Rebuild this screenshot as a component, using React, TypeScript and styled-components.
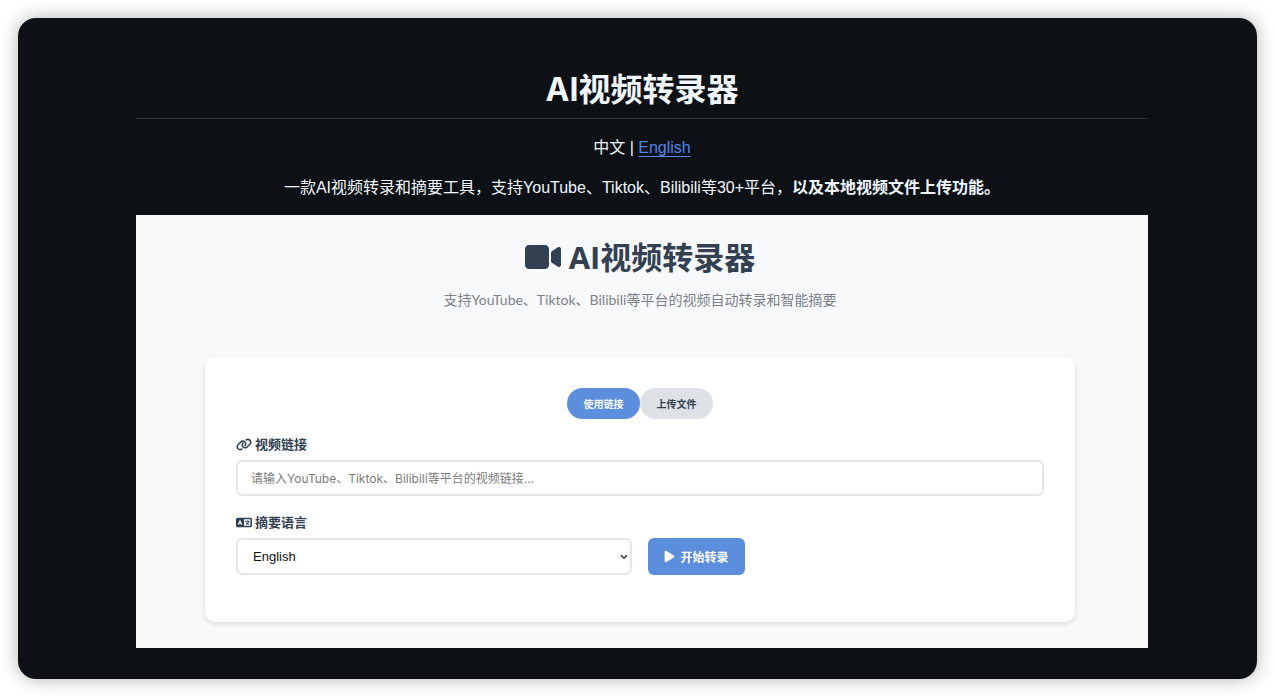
import React, { useState } from "react";
import styled, { createGlobalStyle } from "styled-components";
import { FaVideo, FaLink, FaLanguage, FaPlay } from "react-icons/fa6";

const GlobalStyle = createGlobalStyle`
  *, *::before, *::after { box-sizing: border-box; }
  body {
    margin: 0;
    background: #ffffff;
    font-family: "Liberation Sans", "Noto Sans CJK SC", sans-serif;
  }
`;

const Page = styled.div`
  min-height: 100vh;
  padding: 18px;
  display: flex;
`;

const Frame = styled.main`
  flex: 1;
  min-width: 0;
  padding: 48px 109px 31px 118px;
  border-radius: 18px;
  background: #0d1116;
  color: #f0f6fc;
  box-shadow: 0 0 18px rgba(0, 0, 0, 0.3);
  text-align: center;
`;

const Title = styled.h1`
  margin: 0;
  padding-bottom: 4px;
  border-bottom: 1px solid #2f3238;
  font-family: Inter, "Noto Sans CJK SC", sans-serif;
  font-size: 32px;
  line-height: 48px;
  font-weight: 700;
`;

const Intro = styled.div`
  display: flex;
  flex-direction: column;
  gap: 16px;
  padding: 17px 0 15px;
`;

const Paragraph = styled.p`
  margin: 0;
  font-size: 16px;
  line-height: 24px;
  font-weight: 400;
`;

const LanguageLink = styled.a`
  color: #4f86ea;
  text-decoration: underline;
  text-underline-offset: 3px;
`;

const Panel = styled.section`
  padding: 20px 73px 26px 69px;
  background: #f8f9fb;
  color: #334155;
`;

const PanelTitle = styled.h2`
  display: flex;
  align-items: center;
  justify-content: center;
  gap: 8px;
  margin: 0 0 13px;
  font-family: "Open Sans", "Noto Sans CJK SC", sans-serif;
  font-size: 31px;
  line-height: 44px;
  font-weight: 700;
  color: #334051;

  svg { width: 36px; height: 32px; }
`;

const Subtitle = styled.p`
  margin: 0 0 50px;
  font-family: Lato, "Noto Sans CJK SC", sans-serif;
  font-size: 14px;
  line-height: 15px;
  color: #7c8188;
`;

const Card = styled.form`
  display: flex;
  flex-direction: column;
  padding: 31px 31px 47px;
  border-radius: 10px;
  background: #ffffff;
  box-shadow: 0 2px 5px rgba(0, 0, 0, 0.12);
  text-align: left;
`;

const Tabs = styled.div`
  display: flex;
  justify-content: center;
  margin-bottom: 15px;
`;

const Tab = styled.button<{ $active: boolean }>`
  width: 73px;
  height: 31px;
  padding: 0;
  border: 0;
  border-radius: 16px;
  background: ${(p) => (p.$active ? "#5b8fdd" : "#dee1e6")};
  color: ${(p) => (p.$active ? "#ffffff" : "#334051")};
  font-family: "Noto Sans CJK SC", sans-serif;
  font-size: 10px;
  font-weight: 700;
`;

const Field = styled.div`
  display: flex;
  flex-direction: column;
  gap: 6px;
  min-width: 0;
`;

const Label = styled.label`
  display: flex;
  align-items: center;
  gap: 3px;
  font-family: "Noto Sans CJK SC", sans-serif;
  font-size: 13px;
  line-height: 20px;
  font-weight: 700;
  color: #334051;

  svg { width: 16px; height: 13px; }
`;

const UrlInput = styled.input`
  width: 100%;
  height: 36px;
  padding: 0 13px;
  border: 2px solid #e4e6eb;
  border-radius: 6px;
  background: #ffffff;
  font-family: Inter, "Noto Sans CJK SC", sans-serif;
  font-size: 12px;

  &::placeholder { color: #7b7b7b; opacity: 1; }
`;

const ActionRow = styled.div`
  display: grid;
  grid-template-columns: 49% auto;
  justify-content: start;
  align-items: end;
  gap: 16px;
  margin-top: 16px;
`;

const SelectBox = styled.div`
  position: relative;

  svg {
    position: absolute;
    right: 4px;
    top: 50%;
    margin-top: -3px;
    pointer-events: none;
  }
`;

const Select = styled.select`
  display: block;
  appearance: none;
  width: 100%;
  height: 37px;
  padding: 0 15px;
  border: 2px solid #e4e6eb;
  border-radius: 6px;
  background: #ffffff;
  color: #111111;
  font-family: "Liberation Sans", Arial, sans-serif;
  font-size: 13px;
`;

const StartButton = styled.button`
  display: flex;
  align-items: center;
  justify-content: center;
  gap: 5px;
  width: 97px;
  height: 37px;
  padding: 0;
  border: 0;
  border-radius: 6px;
  background: #5b8fdd;
  color: #ffffff;
  font-family: "Noto Sans CJK SC", sans-serif;
  font-size: 12px;
  font-weight: 700;

  svg { width: 11px; height: 13px; }
`;

type Source = "link" | "file";

export default function App() {
  const [source, setSource] = useState<Source>("link");

  return (
    <>
      <GlobalStyle />
      <Page>
        <Frame lang="zh-CN">
          <Title>AI视频转录器</Title>
          <Intro>
            <Paragraph>
              中文 | <LanguageLink href="#english">English</LanguageLink>
            </Paragraph>
            <Paragraph>
              一款AI视频转录和摘要工具，支持YouTube、Tiktok、Bilibili等30+平台，
              <strong>以及本地视频文件上传功能。</strong>
            </Paragraph>
          </Intro>
          <Panel>
            <PanelTitle>
              <FaVideo aria-hidden />
              AI视频转录器
            </PanelTitle>
            <Subtitle>支持YouTube、Tiktok、Bilibili等平台的视频自动转录和智能摘要</Subtitle>
            <Card onSubmit={(e) => e.preventDefault()}>
              <Tabs>
                <Tab type="button" $active={source === "link"} onClick={() => setSource("link")}>
                  使用链接
                </Tab>
                <Tab type="button" $active={source === "file"} onClick={() => setSource("file")}>
                  上传文件
                </Tab>
              </Tabs>
              <Field>
                <Label htmlFor="video-url">
                  <FaLink aria-hidden />
                  视频链接
                </Label>
                <UrlInput
                  id="video-url"
                  type="url"
                  placeholder="请输入YouTube、Tiktok、Bilibili等平台的视频链接..."
                />
              </Field>
              <ActionRow>
                <Field>
                  <Label htmlFor="summary-language">
                    <FaLanguage aria-hidden />
                    摘要语言
                  </Label>
                  <SelectBox>
                    <Select id="summary-language" defaultValue="en">
                      <option value="en">English</option>
                      <option value="zh">中文</option>
                    </Select>
                    <svg width="8" height="6" viewBox="0 0 8 6" aria-hidden>
                      <path d="M1 1.2 4 4.2 7 1.2" fill="none" stroke="#222" strokeWidth="1.3" />
                    </svg>
                  </SelectBox>
                </Field>
                <StartButton type="submit">
                  <FaPlay aria-hidden />
                  开始转录
                </StartButton>
              </ActionRow>
            </Card>
          </Panel>
        </Frame>
      </Page>
    </>
  );
}
